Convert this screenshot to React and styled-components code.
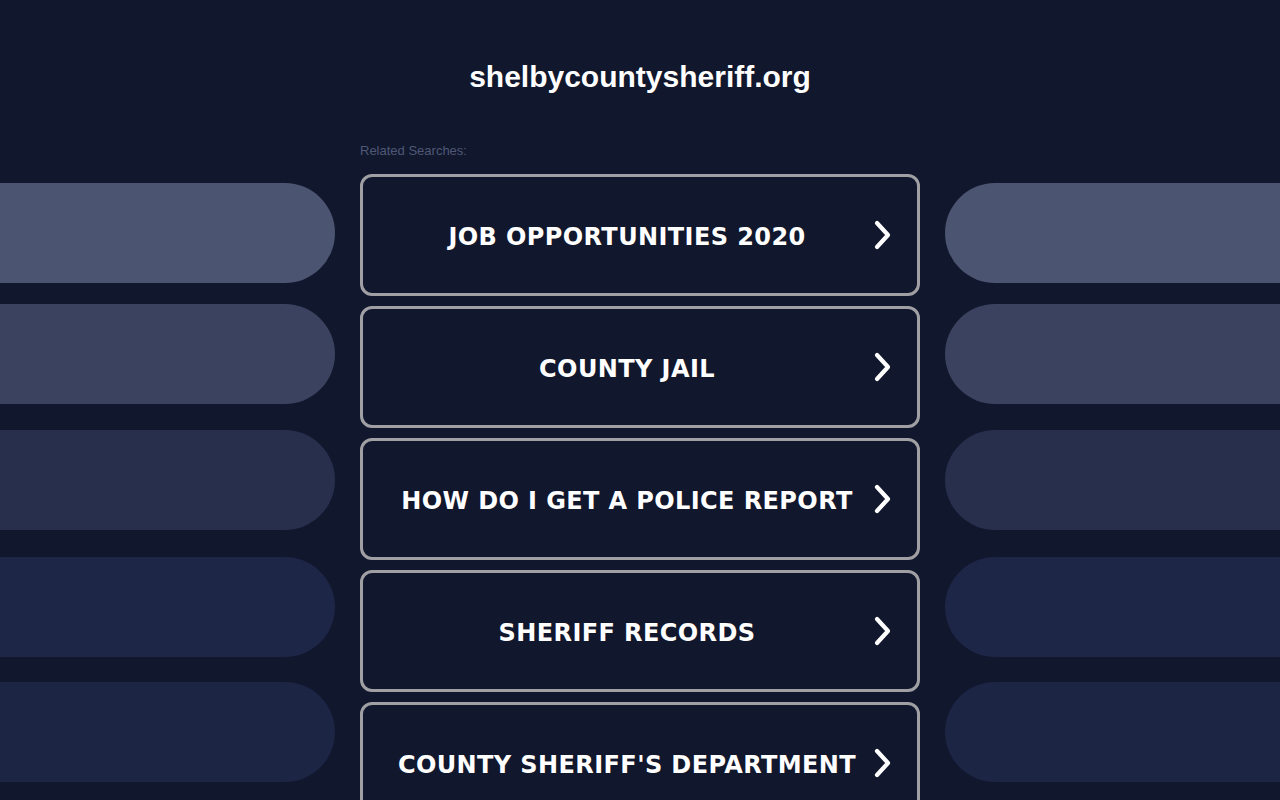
import React from "react";
import styled, { createGlobalStyle } from "styled-components";

const Global = createGlobalStyle`
  html, body { margin: 0; padding: 0; background: #11172c; }
  body { overflow: hidden; font-family: "Liberation Sans", Arial, sans-serif; }
`;

const Page = styled.div`
  width: 1280px;
  height: 800px;
  background: #11172c;
  overflow: hidden;
`;

const Title = styled.h1`
  margin: 0;
  padding-top: 59px;
  height: 36px;
  line-height: 36px;
  text-align: center;
  color: #ffffff;
  font-family: "Liberation Sans", Arial, sans-serif;
  font-weight: 700;
  font-size: 30px;
`;

const Grid = styled.div`
  display: grid;
  grid-template-columns: 1fr 560px 1fr;
  column-gap: 25px;
  margin-top: 48px;
`;

const Side = styled.div`
  display: flex;
  flex-direction: column;
  padding-top: 40px;
`;

const Bar = styled.div`
  height: 100px;
  margin-top: ${(p) => p.$mt}px;
  background: ${(p) => p.$color};
  border-radius: ${(p) => (p.$side === "left" ? "0 50px 50px 0" : "50px 0 0 50px")};
`;

const Center = styled.div`
  display: flex;
  flex-direction: column;
`;

const Label = styled.div`
  font-family: "Liberation Sans", Arial, sans-serif;
  font-size: 13px;
  line-height: 15px;
  color: #4f5777;
  height: 15px;
  margin-bottom: 16px;
`;

const List = styled.div`
  display: flex;
  flex-direction: column;
  gap: 10px;
`;

const Item = styled.a`
  box-sizing: border-box;
  height: 122px;
  display: flex;
  align-items: center;
  gap: 10px;
  padding: 0 25px 0 28px;
  border: 3px solid #a0a0a4;
  border-radius: 12px;
  background: #11172c;
  color: #ffffff;
  text-decoration: none;
`;

const ItemText = styled.span`
  flex: 1;
  text-align: center;
  padding-top: 3px;
  font-family: "DejaVu Sans", Verdana, sans-serif;
  font-weight: 700;
  font-size: 24px;
  letter-spacing: 0.4px;
  white-space: nowrap;
`;

const Chevron = () => (
  <svg width="19" height="30" viewBox="0 0 19 30" style={{ flexShrink: 0 }}>
    <polyline
      points="4,3 15,15 4,27"
      fill="none"
      stroke="#ffffff"
      strokeWidth="4.2"
      strokeLinecap="round"
      strokeLinejoin="round"
    />
  </svg>
);

const bars = [
  { c: "#4b5572", mt: 0 },
  { c: "#3a425f", mt: 21 },
  { c: "#272f4c", mt: 26 },
  { c: "#1e2647", mt: 27 },
  { c: "#1d2545", mt: 25 },
];

const items = [
  "JOB OPPORTUNITIES 2020",
  "COUNTY JAIL",
  "HOW DO I GET A POLICE REPORT",
  "SHERIFF RECORDS",
  "COUNTY SHERIFF'S DEPARTMENT",
];

export default function App() {
  return (
    <Page>
      <Global />
      <Title>shelbycountysheriff.org</Title>
      <Grid>
        <Side>
          {bars.map((b, i) => (
            <Bar key={i} $color={b.c} $mt={b.mt} $side="left" />
          ))}
        </Side>
        <Center>
          <Label>Related Searches:</Label>
          <List>
            {items.map((t) => (
              <Item key={t} href="#">
                <ItemText>{t}</ItemText>
                <Chevron />
              </Item>
            ))}
          </List>
        </Center>
        <Side>
          {bars.map((b, i) => (
            <Bar key={i} $color={b.c} $mt={b.mt} $side="right" />
          ))}
        </Side>
      </Grid>
    </Page>
  );
}
